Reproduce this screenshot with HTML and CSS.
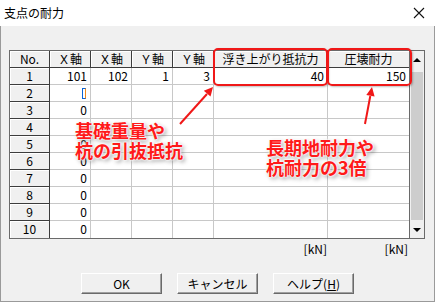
FILE: index.html
```html
<!DOCTYPE html>
<html lang="ja">
<head>
  <meta charset="UTF-8" />
  <title>支点の耐力</title>
  <link rel="stylesheet" href="styles.css">
</head>
<body>
  <div class="window">
    <div class="titlebar">
      <span class="title">支点の耐力</span>
      <svg class="close" width="12" height="12" viewBox="0 0 12 12"><path d="M1 1L11 11M11 1L1 11" stroke="#111" stroke-width="1.1" fill="none"/></svg>
    </div>

    <div class="client">
      <div class="grid-box">
        <div class="grid">
          <div class="hd">No.</div>
          <div class="hd">Ｘ軸</div>
          <div class="hd">Ｘ軸</div>
          <div class="hd">Ｙ軸</div>
          <div class="hd">Ｙ軸</div>
          <div class="hd">浮き上がり抵抗力</div>
          <div class="hd">圧壊耐力</div>

          <div class="rh">1</div><div class="c">101</div><div class="c">102</div><div class="c">1</div><div class="c">3</div><div class="c">40</div><div class="c">150</div>
          <div class="rh">2</div><div class="c"><span class="caret"></span></div><div class="c"></div><div class="c"></div><div class="c"></div><div class="c"></div><div class="c"></div>
          <div class="rh">3</div><div class="c">0</div><div class="c"></div><div class="c"></div><div class="c"></div><div class="c"></div><div class="c"></div>
          <div class="rh">4</div><div class="c">0</div><div class="c"></div><div class="c"></div><div class="c"></div><div class="c"></div><div class="c"></div>
          <div class="rh">5</div><div class="c">0</div><div class="c"></div><div class="c"></div><div class="c"></div><div class="c"></div><div class="c"></div>
          <div class="rh">6</div><div class="c">0</div><div class="c"></div><div class="c"></div><div class="c"></div><div class="c"></div><div class="c"></div>
          <div class="rh">7</div><div class="c">0</div><div class="c"></div><div class="c"></div><div class="c"></div><div class="c"></div><div class="c"></div>
          <div class="rh">8</div><div class="c">0</div><div class="c"></div><div class="c"></div><div class="c"></div><div class="c"></div><div class="c"></div>
          <div class="rh">9</div><div class="c">0</div><div class="c"></div><div class="c"></div><div class="c"></div><div class="c"></div><div class="c"></div>
          <div class="rh last">10</div><div class="c last">0</div><div class="c last"></div><div class="c last"></div><div class="c last"></div><div class="c last"></div><div class="c last"></div>
        </div>
        <div class="scrollbar">
          <div class="sb-btn"><span class="tri-up"></span></div>
          <div class="sb-track"><div class="sb-thumb"></div></div>
          <div class="sb-btn"><span class="tri-down"></span></div>
        </div>
      </div>

      <div class="units">
        <span class="unit u1">[kN]</span>
        <span class="unit u2">[kN]</span>
      </div>

      <div class="buttons">
        <button class="btn">OK</button>
        <button class="btn">キャンセル</button>
        <button class="btn">ヘルプ(<u>H</u>)</button>
      </div>
    </div>

    <div class="mark mark-a"></div>
    <div class="mark mark-b"></div>
    <svg class="arrows" width="435" height="302" viewBox="0 0 435 302">
      <g stroke="#f01818" stroke-width="2" fill="#f01818">
        <line x1="180" y1="124" x2="207" y2="94" />
        <polygon points="213,87 210.5,96.6 203.8,90.8" stroke="none" />
        <line x1="365" y1="124" x2="370.3" y2="96" />
        <polygon points="372,87 374.6,96.6 366.3,95.1" stroke="none" />
      </g>
    </svg>
    <div class="note note-a">基礎重量や<br>杭の引抜抵抗</div>
    <div class="note note-b">長期地耐力や<br>杭耐力の3倍</div>
  </div>
</body>
</html>
```

FILE: styles.css
```css
body {
  margin: 0;
  font-family: "Noto Sans CJK JP", "Liberation Sans", sans-serif;
  font-size: 12px;
  color: #000;
}
.window {
  position: relative;
  width: 435px;
  height: 302px;
  background: #f0f0f0;
  overflow: hidden;
}
.titlebar {
  height: 26px;
  background: #fff;
  display: flex;
  align-items: center;
  justify-content: space-between;
  padding: 0 10px 0 4px;
  box-sizing: border-box;
}
.title {
  font-size: 12px;
  line-height: 16px;
}
.client {
  height: 276px;
  box-sizing: border-box;
  border: 1px solid #9a9a9a;
  border-top: none;
  padding-top: 24px;
}
.grid-box {
  display: flex;
  width: 414px;
  margin-left: 8px;
  border: 1px solid #6a6a6a;
}
.grid {
  display: grid;
  grid-template-columns: 40px 41px 41px 41px 41px 114px 81px;
  grid-auto-rows: 17px;
  width: 399px;
  line-height: 16px;
}
.hd, .rh {
  box-sizing: border-box;
  background: #f0f0f0;
  border-right: 1px solid #3c3c3c;
  border-bottom: 1px solid #3c3c3c;
  box-shadow: inset 1px 1px 0 #fff;
  text-align: center;
  white-space: nowrap;
}
.hd:nth-child(7) {
  border-right: none;
}
.c {
  box-sizing: border-box;
  background: #fff;
  border-right: 1px solid #c8c8c8;
  border-bottom: 1px solid #c8c8c8;
  text-align: right;
  padding-right: 3px;
  white-space: nowrap;
}
.c:nth-child(7n) {
  border-right: none;
}
.last {
  border-bottom: none;
}
.caret {
  display: inline-block;
  width: 2px;
  height: 9px;
  margin-top: 3px;
  margin-right: 1px;
  vertical-align: top;
  border: 1px solid #0a64d8;
  border-right: 1px solid #f08a1c;
}
.scrollbar {
  width: 15px;
  box-sizing: border-box;
  border-left: 1px solid #6a6a6a;
  display: flex;
  flex-direction: column;
  background: #f0f0f0;
}
.sb-btn {
  height: 17px;
  display: flex;
  align-items: center;
  justify-content: center;
  background: #f0f0f0;
}
.tri-up, .tri-down {
  width: 0;
  height: 0;
  border-left: 4px solid transparent;
  border-right: 4px solid transparent;
}
.tri-up {
  border-bottom: 4px solid #000;
}
.tri-down {
  border-top: 4px solid #000;
}
.sb-track {
  flex: 1;
  padding-top: 4px;
  box-sizing: border-box;
}
.sb-thumb {
  height: 148px;
  margin: 0 1px;
  background: #cdcdcd;
}
.units {
  display: grid;
  grid-template-columns: 40px 41px 41px 41px 41px 114px 81px;
  width: 399px;
  margin: 1px 0 0 10px;
  line-height: 17px;
}
.unit {
  text-align: right;
  padding-right: 2px;
}
.u1 {
  grid-column: 6;
}
.u2 {
  grid-column: 7;
}
.buttons {
  display: flex;
  justify-content: center;
  gap: 15px;
  margin-top: 16px;
}
.btn {
  width: 81px;
  height: 21px;
  padding: 0;
  background: #f0f0f0;
  border: 1px solid;
  border-color: #fff #6a6a6a #6a6a6a #fff;
  box-shadow: inset -1px -1px 0 #a0a0a0;
  font-family: "Noto Sans CJK JP", "Liberation Sans", sans-serif;
  font-size: 12px;
  line-height: 17px;
  color: #000;
}
.mark {
  position: absolute;
  top: 48px;
  height: 38px;
  box-sizing: border-box;
  border: 2px solid #f01818;
  border-radius: 5px;
  box-shadow: 1px 1px 2px rgba(0,0,0,0.25);
}
.mark-a {
  left: 213px;
  width: 115px;
}
.mark-b {
  left: 327px;
  width: 85px;
}
.arrows {
  position: absolute;
  left: 0;
  top: 0;
}
.note {
  position: absolute;
  color: #ff1a1a;
  font-size: 18px;
  font-weight: 700;
  line-height: 20px;
  white-space: nowrap;
  text-shadow: 0 0 2px #fff, 0 0 2px #fff, 0 0 3px #fff, 2px 2px 4px rgba(0,0,0,0.45);
}
.note-a {
  left: 75px;
  top: 120px;
}
.note-b {
  left: 266px;
  top: 137px;
}
```
